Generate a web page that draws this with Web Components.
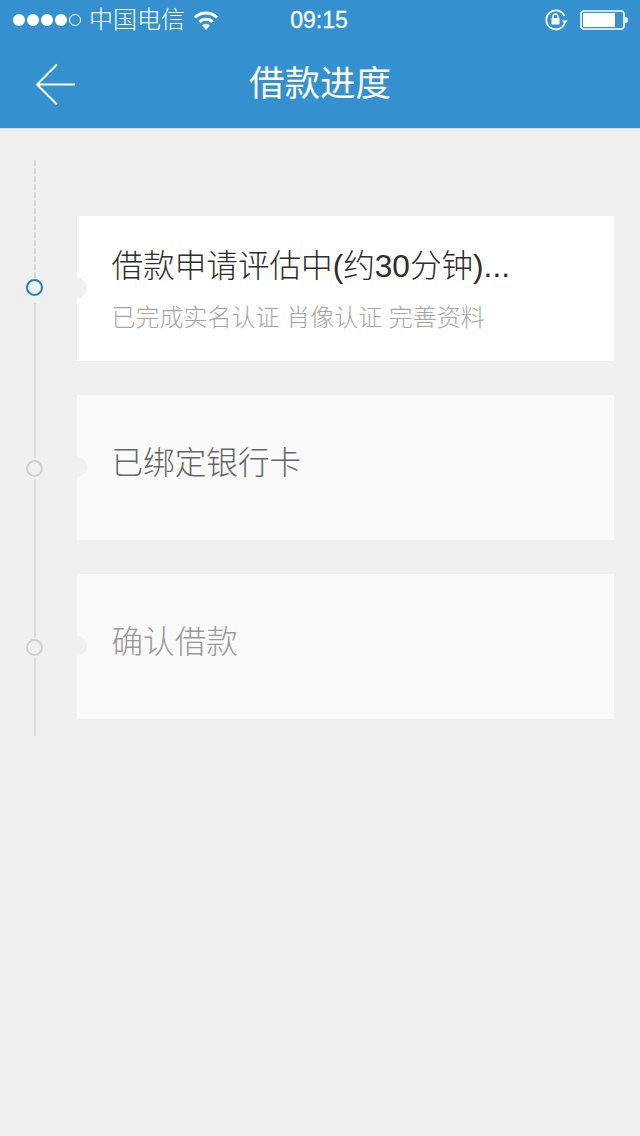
<!DOCTYPE html>
<html>
<head>
  <meta charset="utf-8" />
  <title>借款进度</title>
  <meta name="viewport" content="width=device-width, initial-scale=1">
  <style>
    html, body { margin: 0; height: 100%; }
    body {
      background: #f0f0f0;
      font-family: "Liberation Sans", "Noto Sans CJK SC", sans-serif;
      --blue: #3590cf;
    }
    #app { display: flex; flex-direction: column; height: 1136px; overflow: hidden; }
  </style>
</head>
<body>
  <div id="app">
    <app-header title="借款进度"></app-header>
    <step-list>
      <loan-step state="current" first>
        借款申请评估中(约30分钟)...
        <span slot="sub">已完成实名认证 肖像认证 完善资料</span>
      </loan-step>
      <loan-step state="done">已绑定银行卡</loan-step>
      <loan-step state="todo" last>确认借款</loan-step>
    </step-list>
  </div>

  <script>
    class StatusBar extends HTMLElement {
      constructor() {
        super();
        this.attachShadow({ mode: 'open' });
        this.shadowRoot.innerHTML = `
          <style>
            :host {
              display: flex;
              align-items: center;
              height: 40px;
              padding: 0 12px 0 13px;
              color: #fff;
              font-size: 24px;
            }
            .left, .right { flex: 1 1 0; display: flex; align-items: center; }
            .right { justify-content: flex-end; }
            .signal { display: flex; gap: 2px; margin-right: 8px; }
            .signal i { width: 12px; height: 12px; border-radius: 50%; background: #fff; box-sizing: border-box; }
            .signal i.off { background: none; border: 1px solid #fff; }
            .carrier { font-weight: 300; margin-right: 8px; line-height: 42px; }
            .time { font-size: 23px; line-height: 42px; margin-right: 3px; -webkit-text-stroke: .3px #fff; }
            svg { display: block; }
            .lock { margin-right: 11px; }
          </style>
          <div class="left">
            <div class="signal"><i></i><i></i><i></i><i></i><i class="off"></i></div>
            <span class="carrier">中国电信</span>
            <svg width="26" height="20" viewBox="0 0 26 20" fill="none" stroke="#fff" stroke-width="3">
              <path d="M2 7.5a15.5 15.5 0 0 1 22 0"/>
              <path d="M6.5 12a9.2 9.2 0 0 1 13 0"/>
              <path d="M13 20l-4-4.6a5.6 5.6 0 0 1 8 0z" fill="#fff" stroke="none"/>
            </svg>
          </div>
          <span class="time">09:15</span>
          <div class="right">
            <svg class="lock" width="24" height="22" viewBox="0 0 24 22" fill="none" stroke="#fff">
              <path d="M19.6 14.5A9.5 9.5 0 1 1 19.5 7" stroke-width="1.8"/>
              <path d="M16.8 11.5h6l-3 3.6z" fill="#fff" stroke="none"/>
              <rect x="6.5" y="9" width="8" height="6.5" fill="#fff" stroke="none"/>
              <path d="M8 9V7.5a2.5 2.5 0 0 1 5 0V9" stroke-width="1.4"/>
            </svg>
            <svg width="48" height="20" viewBox="0 0 48 20">
              <rect x="1" y="1" width="43" height="18" rx="3" fill="none" stroke="#fff" stroke-width="1.6"/>
              <rect x="3" y="3" width="32" height="14" fill="#fff"/>
              <path d="M45 7c2 0 3 1 3 3s-1 3-3 3z" fill="#fff"/>
            </svg>
          </div>`;
      }
    }
    customElements.define('status-bar', StatusBar);

    class AppHeader extends HTMLElement {
      constructor() {
        super();
        this.attachShadow({ mode: 'open' });
        this.shadowRoot.innerHTML = `
          <style>
            :host {
              display: block;
              flex: none;
              background: var(--blue);
              color: #fff;
              border-bottom: 1px solid #d8dcdf;
            }
            .bar {
              display: flex;
              align-items: center;
              justify-content: center;
              height: 88px;
              position: relative;
            }
            h1 { margin: 0; font-size: 35.5px; font-weight: 400; line-height: 90px; }
            button {
              position: absolute;
              left: 35px;
              top: 23px;
              width: 42px;
              height: 42px;
              padding: 0;
              border: 0;
              background: none;
            }
            svg { display: block; }
          </style>
          <status-bar></status-bar>
          <div class="bar">
            <button aria-label="back">
              <svg width="42" height="42" viewBox="0 0 42 42" fill="none" stroke="#fff" stroke-width="2">
                <path d="M22 1.5L2 21.5l20 20M2 21.5h38"/>
              </svg>
            </button>
            <h1></h1>
          </div>`;
        this.shadowRoot.querySelector('h1').textContent = this.getAttribute('title');
      }
    }
    customElements.define('app-header', AppHeader);

    class StepList extends HTMLElement {
      constructor() {
        super();
        this.attachShadow({ mode: 'open' });
        this.shadowRoot.innerHTML = `
          <style>
            :host { display: flex; flex-direction: column; padding: 31px 26px 0 26px; }
          </style>
          <slot></slot>`;
      }
    }
    customElements.define('step-list', StepList);

    class LoanStep extends HTMLElement {
      constructor() {
        super();
        this.attachShadow({ mode: 'open' });
        this.shadowRoot.innerHTML = `
          <style>
            :host {
              display: grid;
              grid-template-columns: 17px 1fr;
              column-gap: 34px;
              --dot: #cfcfcf;
              --card: #fafafa;
              --text: #999;
            }
            :host([state="current"]) { --dot: #2c7fb5; --card: #fff; --text: #2e2e2e; }
            :host([state="done"]) { --text: #666; }

            .rail { display: flex; flex-direction: column; align-items: center; }
            .line { width: 2px; margin-left: 1px; background: #dcdcdc; }
            .before { height: 63px; margin-bottom: 2px; }
            .after { flex: 1; margin-top: 2px; }
            :host([first]) .before {
              height: 119px;
              margin-bottom: 0;
              background: repeating-linear-gradient(#d6d6d6 0 6px, transparent 6px 8px);
            }
            :host([first]) .after { margin-top: 7px; }
            .dot {
              flex: none;
              width: 17px;
              height: 17px;
              box-sizing: border-box;
              border: 2px solid var(--dot);
              border-radius: 50%;
              background: #f0f0f0;
            }
            :host([first]) .dot { background: #eef5fa; }

            .body { padding-bottom: 34px; }
            :host([first]) .body { padding-top: 56px; }
            :host([last]) .body { padding-bottom: 17px; }
            .card {
              position: relative;
              height: 145px;
              box-sizing: border-box;
              padding: 28px 20px 0 34.5px;
              background: var(--card);
              color: var(--text);
            }
            :host(:not([first])) .card { padding-top: 46px; }
            .card::before {
              content: '';
              position: absolute;
              left: -10px;
              top: 62px;
              width: 20px;
              height: 20px;
              border-radius: 50%;
              background: #f0f0f0;
            }
            .title { font-size: 31.6px; font-weight: 300; line-height: 44px; white-space: nowrap; }
            .sub { font-size: 24px; line-height: 36px; margin-top: 12px; color: #a6a6a6; font-weight: 300; white-space: nowrap; }
          </style>
          <div class="rail">
            <div class="line before"></div>
            <div class="dot"></div>
            <div class="line after"></div>
          </div>
          <div class="body">
            <div class="card">
              <div class="title"><slot></slot></div>
              <div class="sub"><slot name="sub"></slot></div>
            </div>
          </div>`;
      }
    }
    customElements.define('loan-step', LoanStep);
  </script>
</body>
</html>
